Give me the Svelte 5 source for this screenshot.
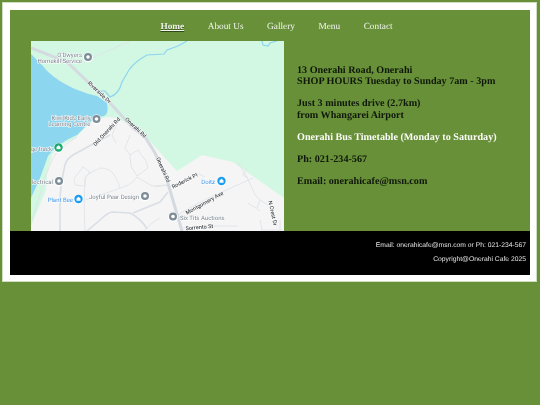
<script>
  const nav = ['Home', 'About Us', 'Gallery', 'Menu', 'Contact'];
  const thinRoads = [
    'M77 137 C66 144 58 150 53 158 C48 168 46 176 43 185 L30 226',
    'M75 185 C74 180 74 178 76 176 L83 167 L90 172 L85 178 L85 186 Z',
    'M85 232 C84 215 84 195 85 182 C85 177 87 175 90 173 L100 168 C106 168 110 170 113 173 C116 178 119 183 120 188',
    'M85 200 C100 195 110 192 120 188 C128 186 134 182 137 177',
    'M130 135 L125 148 L130 155 L138 150 L146 161 L148 168 L137 176 L131 166 L130 155',
    'M137 177 L152 186 L167 185',
    'M145 230 L152 223 L160 218',
    'M155 187 L168 185',
    'M172 188 L197 173 L205 177',
    'M178 215 C190 207 208 198 222 192 L253 178',
    'M238 163 L247 177 L255 195 L260 200 L268 205',
    'M247 168 L243 175 L248 178',
    'M260 200 L257 208 M248 203 L260 211',
    'M183 228 L210 226 L238 226',
    'M260 220 L262 230 L283 230 M280 220 L280 230',
    'M92 58 L130 41',
    'M117 124 L112 135 L116 143'
  ];
  const wideRoads = [
    'M110 135 L93 144 L73 155 C68 158 66 161 65 165 C62 178 60 190 60 202 L60 232',
    'M87 231 L100 220 C105 215 109 212 113 212 L130 213 C136 216 143 222 147 229',
    'M133 213 L160 202 L168 192'
  ];
  const labels = [
    { t: "O'Dwyers", x: 82, y: 56.5, a: 'end' },
    { t: 'Homekill Service', x: 82, y: 62.5, a: 'end' },
    { t: 'Kiwi Kids Early', x: 90.5, y: 119.5, a: 'end' },
    { t: 'Learning Centre', x: 90.5, y: 125.5, a: 'end' },
    { t: 'ge track', x: 52, y: 150.5, a: 'end' },
    { t: 'lectrical', x: 53, y: 184, a: 'end' },
    { t: 'Joyful Pear Design', x: 139, y: 199, a: 'end' },
    { t: 'Six Tits Auctions', x: 180, y: 219.5, a: 'start' },
    { t: 'Plant Bee', x: 73, y: 202, a: 'end', blue: true },
    { t: 'Doitz', x: 215, y: 184, a: 'end', blue: true }
  ];
  const roadLabels = [
    { t: 'Riverside Dr', x: 98, y: 93.5, r: 43 },
    { t: 'Onerahi Rd', x: 134.5, y: 129, r: 43 },
    { t: 'Old Onerahi Rd', x: 108, y: 133, r: -47 },
    { t: 'Onerahi Rd', x: 161.5, y: 170.5, r: 66 },
    { t: 'Roderick Pl', x: 185.5, y: 182.5, r: -27 },
    { t: 'Montgomery Ave', x: 205.5, y: 204.5, r: -29 },
    { t: 'Sorrento St', x: 199.5, y: 229, r: -5 },
    { t: 'N Crest Dr', x: 271, y: 213.5, r: 78 }
  ];
  const pins = [
    { x: 88, y: 57, c: '#7d8d97' },
    { x: 96.5, y: 119, c: '#7d8d97' },
    { x: 59, y: 181, c: '#7d8d97' },
    { x: 145, y: 196, c: '#7d8d97' },
    { x: 173, y: 216.5, c: '#7d8d97' }
  ];
  const shops = [
    { x: 58.5, y: 147.5, c: '#16a970' },
    { x: 78.5, y: 199, c: '#1a9cf0' },
    { x: 221.5, y: 181, c: '#1a9cf0' }
  ];
</script>

<div class="frame">
  <nav class="nav">
    {#each nav as item, i}
      <a href="#top" class:active={i === 0}>{item}</a>
    {/each}
  </nav>

  <section class="content">
    <div class="map">
      <svg viewBox="31 41 253 190" width="253" height="190" aria-hidden="true">
        <rect x="31" y="41" width="253" height="190" fill="#d2f7e3" />
        <path class="water" d="M31 54 L43 66 C50 76 70 90 97 96 L107 103 C108 110 108 114 104 116 C98 117 94 119 90 122 L77 135 C65 140 56 146 48 156 L40 178 L31 198 Z" />
        <path class="river" d="M187 41 L178 46 L167 50 L164 54 L147 55 C138 60 133 64 129 70 L122 82 C120 90 116 95 110 97 L105 91 L100 91" />
        <path class="river" d="M262 41 L263 45 L268 46 L270 43 L277 41" />
        <path class="land" d="M31 226 L46 190 L47 172 L52 155 C58 146 66 142 74 139 L90 123 L106 117 L117 118 L133 127 L146 137 L177 171 L202 155 L233 162 L284 198 L284 231 L31 231 Z" />
        {#each thinRoads as d}
          <path class="minor" {d} />
        {/each}
        {#each wideRoads as d}
          <path class="mid" {d} />
        {/each}
        <path class="major" d="M31 48 L67 62 L88 82 L110 103 L133 128 L145 137 L155 153 L167 180 L182 231" />
        {#each roadLabels as l}
          <text class="road-label" x={l.x} y={l.y} transform="rotate({l.r} {l.x} {l.y})" text-anchor="middle">{l.t}</text>
        {/each}
        {#each labels as l}
          <text class="label" class:blue={l.blue} x={l.x} y={l.y} text-anchor={l.a}>{l.t}</text>
        {/each}
        {#each pins as p}
          <circle cx={p.x} cy={p.y + 0.5} r="5" fill="#fff" />
          <circle cx={p.x} cy={p.y} r="4" fill={p.c} />
          <circle cx={p.x} cy={p.y} r="1.8" fill="#fff" />
        {/each}
        {#each shops as p}
          <circle cx={p.x} cy={p.y + 0.5} r="5" fill="#fff" />
          <circle cx={p.x} cy={p.y} r="4.2" fill={p.c} />
          <path d="M{p.x - 2} {p.y + 1.8} V{p.y - 0.4} L{p.x} {p.y - 2.2} L{p.x + 2} {p.y - 0.4} V{p.y + 1.8} Z" fill="#fff" />
        {/each}
      </svg>
    </div>

    <div class="info">
      <p>13 Onerahi Road, Onerahi<br />SHOP HOURS Tuesday to Sunday 7am - 3pm</p>
      <p>Just 3 minutes drive (2.7km)<br />from Whangarei Airport</p>
      <p class="bus">Onerahi Bus Timetable (Monday to Saturday)</p>
      <p>Ph: 021-234-567</p>
      <p>Email: onerahicafe@msn.com</p>
    </div>
  </section>

  <footer class="footer">
    <p>Email: onerahicafe@msn.com or Ph: 021-234-567</p>
    <p>Copyright@Onerahi Cafe 2025</p>
  </footer>
</div>

<style>
  :global(body) {
    margin: 0;
    background: #679038;
    min-height: 405px;
  }
  .frame {
    width: 520px;
    margin: 3px 0 0 3px;
    border: solid #fff;
    border-width: 7px 6px 6px 7px;
    box-shadow: 0 0 0 1px #cfddc0;
    background: #679038;
    font-family: 'Liberation Serif', 'Times New Roman', serif;
    text-rendering: geometricPrecision;
    filter: blur(0.35px);
  }
  .nav {
    height: 31px;
    display: flex;
    justify-content: center;
    gap: 23.5px;
    padding: 11px 0 0 13px;
    box-sizing: border-box;
    font-size: 9.3px;
    line-height: 12px;
  }
  .nav a {
    color: #f3f6ee;
    text-decoration: none;
  }
  .nav a.active {
    font-weight: bold;
    text-decoration: underline;
    text-shadow: 0 1px 1px #2f4a16;
  }
  .content {
    display: flex;
    height: 190px;
    padding-left: 21px;
  }
  .map {
    width: 253px;
    height: 190px;
    flex: none;
  }
  .map svg {
    display: block;
  }
  .water {
    fill: #8dd6ef;
  }
  .river {
    fill: none;
    stroke: #8dd6ef;
    stroke-width: 1.2;
  }
  .land {
    fill: #f5f5f6;
  }
  .minor {
    fill: none;
    stroke: #e0e3e7;
    stroke-width: 0.9;
  }
  .mid {
    fill: none;
    stroke: #d9dfe4;
    stroke-width: 1.6;
  }
  .major {
    fill: none;
    stroke: #d4dae0;
    stroke-width: 3;
  }
  .label,
  .road-label {
    font-family: Roboto, 'Liberation Sans', sans-serif;
    paint-order: stroke;
    stroke: #fff;
    stroke-width: 1px;
  }
  .label {
    font-size: 6px;
    fill: #78858e;
  }
  .label.blue {
    fill: #3e93e8;
  }
  .road-label {
    font-size: 5.5px;
    font-weight: 500;
    fill: #3f4549;
  }
  .info {
    padding: 23.6px 0 0 13px;
    font-size: 10.15px;
    font-weight: bold;
    line-height: 11.4px;
    color: #10180a;
  }
  .info p {
    margin: 0 0 10.8px;
  }
  .info .bus {
    color: #fbfcf8;
  }
  .footer {
    height: 44px;
    background: #000;
    box-sizing: border-box;
    padding: 11px 4px 0 0;
    text-align: right;
    font-family: 'Liberation Sans', Arial, sans-serif;
    font-size: 6.75px;
    line-height: 8px;
    color: #e4e4e4;
  }
  .footer p {
    margin: 0 0 6px;
  }
</style>
